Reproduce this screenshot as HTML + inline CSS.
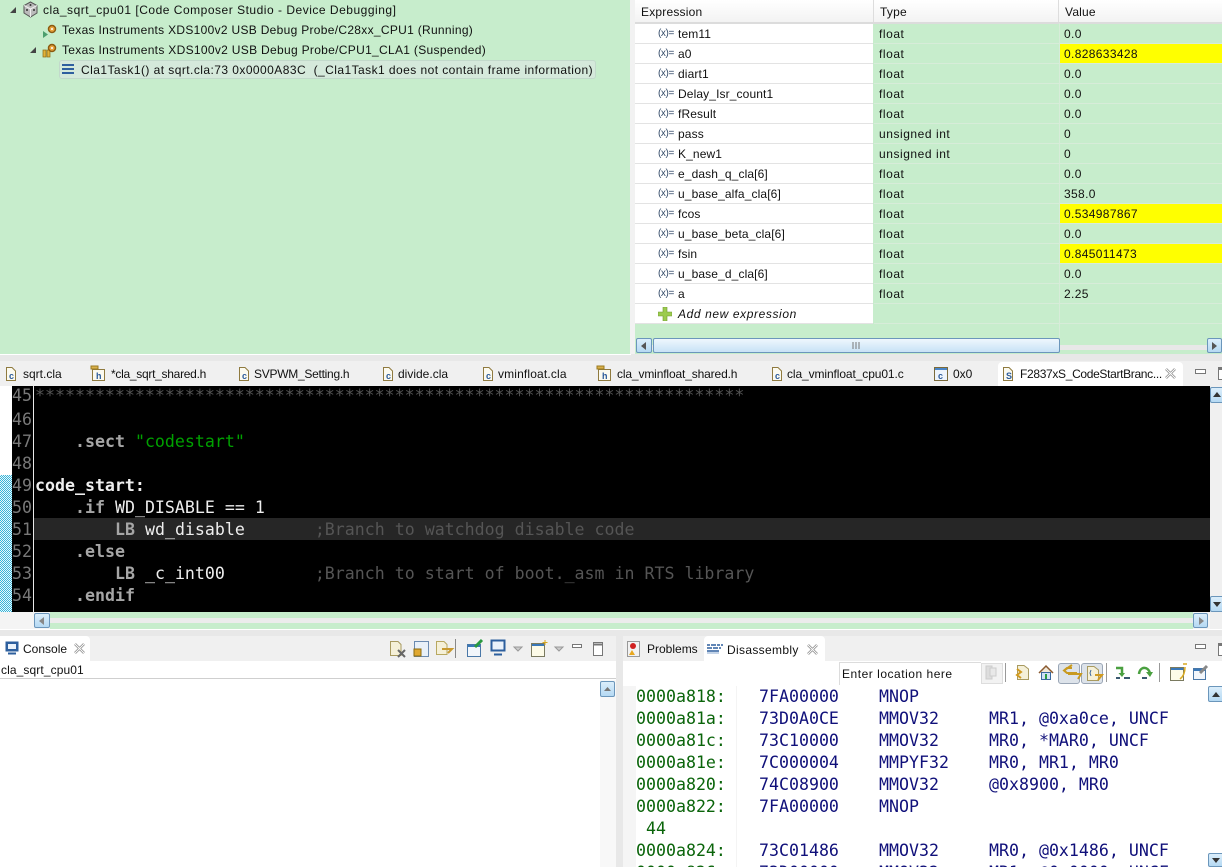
<!DOCTYPE html>
<html><head><meta charset="utf-8"><style>
html,body{margin:0;padding:0;width:1222px;height:867px;overflow:hidden;background:#e8e8e8}
body{position:relative;font:12px "Liberation Sans",sans-serif;color:#111}
div,span.a,svg{position:absolute}
.t{white-space:pre;line-height:16px;height:16px}
.m{font:16.6px "DejaVu Sans Mono",monospace;white-space:pre;line-height:22px;height:22px}
.ln{left:12px;width:20px;color:#787878;font:16.6px "DejaVu Sans Mono",monospace;line-height:22px;height:22px}
.c{color:#a6a6a6;font-weight:bold}.w{color:#eee}.k{color:#a6a6a6;font-weight:bold}.g{color:#00a000}.cm{color:#555}
.ad{color:#0a640a;left:636px}.hx,.op,.ar{color:#10107a}
.hx{left:759px}.op{left:879px}.ar{left:989px}
.sb{background:linear-gradient(#dbeefb,#b5d9f3);border:1px solid #6b96bb;border-radius:2px;box-sizing:border-box}
.h{left:635px;width:238px;height:19px;background:#fff;border-bottom:1px solid #e3e3e3}
.gl{left:874px;right:0;height:1px;background:#d7ecd9}
.x{font-size:10px;color:#334a68;left:658px;line-height:16px;letter-spacing:-.4px}
.n{left:678px;letter-spacing:.12px}.ty{left:879px;letter-spacing:.55px}.v{left:1064px;letter-spacing:.35px}
.y{left:1060px;width:162px;height:19px;background:#ff0}
</style></head><body>

<!-- top left -->
<div style="left:0;top:0;width:630px;height:354px;background:#c7edcc;border-right:1px solid #fff;border-bottom:1px solid #fff"></div>
<div style="left:630px;top:0;width:5px;height:354px;background:#f2f2f2"></div>

<svg style="left:9px;top:6px" width="8" height="8"><path d="M7 1V7H1Z" fill="#444"/></svg>
<svg style="left:22px;top:1px" width="17" height="17" viewBox="0 0 17 17"><path d="M8.500 1L15 4.500V12L8.500 16L2 12V4.500Z" fill="#bbb" stroke="#555"/><path d="M2 4.500L8.500 8L15 4.500M8.500 8V16" fill="none" stroke="#eee"/><circle cx="5" cy="9" r="1" fill="#333"/><circle cx="12" cy="9" r="1" fill="#333"/><circle cx="8.500" cy="4" r="1" fill="#333"/></svg>
<div class="t" style="left:43px;top:2px;letter-spacing:.51px">cla_sqrt_cpu01 [Code Composer Studio - Device Debugging]</div>

<svg style="left:42px;top:23px" width="16" height="16" viewBox="0 0 16 16"><path d="M1 8V15L6 11.500Z" fill="#4c9f6e"/><circle cx="10" cy="6" r="3.500" fill="#e8a33d" stroke="#8a5a10" stroke-width="1.500"/><circle cx="10" cy="6" r="1" fill="#fff"/></svg>
<div class="t" style="left:62px;top:22px;letter-spacing:.3px">Texas Instruments XDS100v2 USB Debug Probe/C28xx_CPU1 (Running)</div>

<svg style="left:29px;top:46px" width="8" height="8"><path d="M7 1V7H1Z" fill="#444"/></svg>
<svg style="left:41px;top:42px" width="17" height="16" viewBox="0 0 17 16"><rect x="2" y="8" width="3" height="7" fill="#e2b23a" stroke="#8a6a10" stroke-width=".7"/><rect x="6" y="8" width="3" height="7" fill="#e2b23a" stroke="#8a6a10" stroke-width=".7"/><circle cx="11" cy="6" r="3.500" fill="#e8a33d" stroke="#8a5a10" stroke-width="1.500"/><circle cx="11" cy="6" r="1" fill="#fff"/></svg>
<div class="t" style="left:62px;top:42px;letter-spacing:.31px">Texas Instruments XDS100v2 USB Debug Probe/CPU1_CLA1 (Suspended)</div>

<div style="left:59px;top:60px;width:537px;height:19px;background:#d5e9db;border:1px solid #c2d9cb;border-radius:3px;box-sizing:border-box"></div>
<svg style="left:62px;top:63px" width="13" height="13"><path d="M0 2H12M0 6H12M0 10H12" stroke="#2f5f9f" stroke-width="2"/></svg>
<div class="t" style="left:81px;top:62px;letter-spacing:.44px">Cla1Task1() at sqrt.cla:73 0x0000A83C  (_Cla1Task1 does not contain frame information)</div>

<!-- top right -->
<div style="left:635px;top:23px;width:587px;height:331px;background:#c7edcc"></div>
<div style="left:635px;top:0;width:587px;height:22px;background:linear-gradient(#fff,#f3f3f3);border-bottom:2px solid #dcdcdc"></div>
<div style="left:873px;top:0;width:1px;height:22px;background:#ddd"></div>
<div style="left:1058px;top:0;width:1px;height:22px;background:#ddd"></div>
<div class="t" style="left:641px;top:4px;letter-spacing:.2px">Expression</div>
<div class="t" style="left:880px;top:4px;letter-spacing:.2px">Type</div>
<div class="t" style="left:1065px;top:4px;letter-spacing:.2px">Value</div>
<div style="left:1059px;top:23px;width:1px;height:315px;background:#d7ecd9"></div>

<div class="h" style="top:24px"></div><div class="h" style="top:44px"></div><div class="h" style="top:64px"></div><div class="h" style="top:84px"></div><div class="h" style="top:104px"></div><div class="h" style="top:124px"></div><div class="h" style="top:144px"></div><div class="h" style="top:164px"></div><div class="h" style="top:184px"></div><div class="h" style="top:204px"></div><div class="h" style="top:224px"></div><div class="h" style="top:244px"></div><div class="h" style="top:264px"></div><div class="h" style="top:284px"></div><div class="h" style="top:304px"></div>
<div class="gl" style="top:43px"></div><div class="gl" style="top:63px"></div><div class="gl" style="top:83px"></div><div class="gl" style="top:103px"></div><div class="gl" style="top:123px"></div><div class="gl" style="top:143px"></div><div class="gl" style="top:163px"></div><div class="gl" style="top:183px"></div><div class="gl" style="top:203px"></div><div class="gl" style="top:223px"></div><div class="gl" style="top:243px"></div><div class="gl" style="top:263px"></div><div class="gl" style="top:283px"></div><div class="gl" style="top:303px"></div><div class="gl" style="top:323px"></div>
<div class="y" style="top:44px"></div><div class="y" style="top:204px"></div><div class="y" style="top:244px"></div>

<div class="t x" style="top:26px">(x)=</div><div class="t n" style="top:26px">tem11</div><div class="t ty" style="top:26px">float</div><div class="t v" style="top:26px">0.0</div>
<div class="t x" style="top:46px">(x)=</div><div class="t n" style="top:46px">a0</div><div class="t ty" style="top:46px">float</div><div class="t v" style="top:46px">0.828633428</div>
<div class="t x" style="top:66px">(x)=</div><div class="t n" style="top:66px">diart1</div><div class="t ty" style="top:66px">float</div><div class="t v" style="top:66px">0.0</div>
<div class="t x" style="top:86px">(x)=</div><div class="t n" style="top:86px">Delay_Isr_count1</div><div class="t ty" style="top:86px">float</div><div class="t v" style="top:86px">0.0</div>
<div class="t x" style="top:106px">(x)=</div><div class="t n" style="top:106px">fResult</div><div class="t ty" style="top:106px">float</div><div class="t v" style="top:106px">0.0</div>
<div class="t x" style="top:126px">(x)=</div><div class="t n" style="top:126px">pass</div><div class="t ty" style="top:126px">unsigned int</div><div class="t v" style="top:126px">0</div>
<div class="t x" style="top:146px">(x)=</div><div class="t n" style="top:146px">K_new1</div><div class="t ty" style="top:146px">unsigned int</div><div class="t v" style="top:146px">0</div>
<div class="t x" style="top:166px">(x)=</div><div class="t n" style="top:166px">e_dash_q_cla[6]</div><div class="t ty" style="top:166px">float</div><div class="t v" style="top:166px">0.0</div>
<div class="t x" style="top:186px">(x)=</div><div class="t n" style="top:186px">u_base_alfa_cla[6]</div><div class="t ty" style="top:186px">float</div><div class="t v" style="top:186px">358.0</div>
<div class="t x" style="top:206px">(x)=</div><div class="t n" style="top:206px">fcos</div><div class="t ty" style="top:206px">float</div><div class="t v" style="top:206px">0.534987867</div>
<div class="t x" style="top:226px">(x)=</div><div class="t n" style="top:226px">u_base_beta_cla[6]</div><div class="t ty" style="top:226px">float</div><div class="t v" style="top:226px">0.0</div>
<div class="t x" style="top:246px">(x)=</div><div class="t n" style="top:246px">fsin</div><div class="t ty" style="top:246px">float</div><div class="t v" style="top:246px">0.845011473</div>
<div class="t x" style="top:266px">(x)=</div><div class="t n" style="top:266px">u_base_d_cla[6]</div><div class="t ty" style="top:266px">float</div><div class="t v" style="top:266px">0.0</div>
<div class="t x" style="top:286px">(x)=</div><div class="t n" style="top:286px">a</div><div class="t ty" style="top:286px">float</div><div class="t v" style="top:286px">2.25</div>
<svg style="left:658px;top:307px" width="14" height="14"><path d="M5 0H9V5H14V9H9V14H5V9H0V5H5Z" fill="#9ccb4f" stroke="#6f9a30" stroke-width=".6"/></svg>
<div class="t n" style="top:306px;font-style:italic;letter-spacing:.6px">Add new expression</div>

<!-- top h-scroll -->
<div style="left:636px;top:345px;width:586px;height:5px;background:#e8e8e8"></div>
<div class="sb" style="left:636px;top:338px;width:16px;height:15px"></div>
<svg style="left:641px;top:342px" width="6" height="8"><path d="M5 0V8L0 4Z" fill="#555"/></svg>
<div class="sb" style="left:653px;top:338px;width:407px;height:15px;background:linear-gradient(#eef7fd,#c8e2f6)"></div>
<svg style="left:852px;top:342px" width="8" height="7"><path d="M1 0V7M4 0V7M7 0V7" stroke="#777"/></svg>
<div class="sb" style="left:1207px;top:338px;width:15px;height:15px"></div>
<svg style="left:1212px;top:342px" width="6" height="8"><path d="M0 0V8L5 4Z" fill="#555"/></svg>

<!-- editor tabs -->
<div style="left:0;top:361px;width:1222px;height:25px;background:#f0f0f0"></div>
<div style="left:998px;top:362px;width:185px;height:24px;background:#fff;border-radius:4px 4px 0 0"></div>
<svg style="left:0;top:0" width="1222" height="390" fill="none">
<g stroke="#8f7a3f" fill="#fbfaf0"><path d="M6.500 367.500H12L15.500 371V380.500H6.500Z"/><path d="M239.500 367.500H245L248.500 371V380.500H239.500Z"/><path d="M383.500 367.500H389L392.500 371V380.500H383.500Z"/><path d="M483.500 367.500H489L492.500 371V380.500H483.500Z"/><path d="M772.500 367.500H778L781.500 371V380.500H772.500Z"/><path d="M1003.500 367.500H1009L1012.500 371V380.500H1003.500Z"/><path d="M92.500 369.500H104.500V380.500H92.500Z"/><path d="M598.500 369.500H610.500V380.500H598.500Z"/></g>
<path d="M91 366H98V369H91ZM597 366H604V369H597Z" fill="#d9b04a" stroke="#9a7a20"/>
<rect x="934.500" y="367.500" width="13" height="13" fill="#eef4fb" stroke="#7a6a3a"/><path d="M935 369H947" stroke="#4a86c8" stroke-width="2"/>
</svg>
<div class="t" style="left:9px;top:370px;font-size:9px;font-weight:bold;color:#2a5a9a;line-height:12px;height:12px">c</div>
<div class="t" style="left:242px;top:370px;font-size:9px;font-weight:bold;color:#2a5a9a;line-height:12px;height:12px">c</div>
<div class="t" style="left:386px;top:370px;font-size:9px;font-weight:bold;color:#2a5a9a;line-height:12px;height:12px">c</div>
<div class="t" style="left:486px;top:370px;font-size:9px;font-weight:bold;color:#2a5a9a;line-height:12px;height:12px">c</div>
<div class="t" style="left:775px;top:370px;font-size:9px;font-weight:bold;color:#2a5a9a;line-height:12px;height:12px">c</div>
<div class="t" style="left:1006px;top:370px;font-size:9px;font-weight:bold;color:#2a5a9a;line-height:12px;height:12px">S</div>
<div class="t" style="left:96px;top:371px;font-size:9px;font-weight:bold;color:#2a5a9a;line-height:10px;height:10px">h</div>
<div class="t" style="left:602px;top:371px;font-size:9px;font-weight:bold;color:#2a5a9a;line-height:10px;height:10px">h</div>
<div class="t" style="left:938px;top:370px;font-size:9px;font-weight:bold;color:#2a5a9a;line-height:12px;height:12px">c</div>
<div class="t" style="left:23px;top:366px">sqrt.cla</div>
<div class="t" style="left:111px;top:366px;letter-spacing:-.28px">*cla_sqrt_shared.h</div>
<div class="t" style="left:254px;top:366px;letter-spacing:-.27px">SVPWM_Setting.h</div>
<div class="t" style="left:398px;top:366px">divide.cla</div>
<div class="t" style="left:498px;top:366px;letter-spacing:.15px">vminfloat.cla</div>
<div class="t" style="left:617px;top:366px;letter-spacing:-.14px">cla_vminfloat_shared.h</div>
<div class="t" style="left:787px;top:366px;letter-spacing:-.1px">cla_vminfloat_cpu01.c</div>
<div class="t" style="left:953px;top:366px">0x0</div>
<div class="t" style="left:1020px;top:366px;letter-spacing:-.33px">F2837xS_CodeStartBranc...</div>
<svg style="left:1165px;top:368px" width="11" height="11"><path d="M1 1L10 10M10 1L1 10" stroke="#888" stroke-width="2.500"/><path d="M1 1L10 10M10 1L1 10" stroke="#fff"/></svg>
<div style="left:1195px;top:369px;width:9px;height:3px;border:1px solid #777;background:#fff"></div>
<div style="left:1218px;top:367px;width:9px;height:9px;border:1px solid #777;border-top-width:3px;background:#fff"></div>

<!-- editor -->
<div style="left:0;top:386px;width:1210px;height:226px;background:#000"></div>
<div style="left:0;top:386px;width:12px;height:226px;background:#fff"></div>
<div style="left:0;top:475px;width:12px;height:137px;background:repeating-conic-gradient(#38b4d8 0 25%,#eaf8fc 0 50%) 0 0/2px 2px"></div>
<div style="left:33px;top:386px;width:1px;height:226px;background:#e8e8e8"></div>
<div style="left:34px;top:518px;width:1176px;height:22px;background:#262626"></div>
<div class="ln" style="top:385px">45</div><div class="ln" style="top:409px">46</div><div class="ln" style="top:431px">47</div><div class="ln" style="top:453px">48</div><div class="ln" style="top:475px">49</div><div class="ln" style="top:497px">50</div><div class="ln" style="top:519px">51</div><div class="ln" style="top:541px">52</div><div class="ln" style="top:563px">53</div><div class="ln" style="top:585px">54</div>
<div class="m cm" style="left:35px;top:385px">***********************************************************************</div>
<div class="m" style="left:75px;top:431px"><span class="k">.sect</span> <span class="g">"codestart"</span></div>
<div class="m w" style="left:35px;top:475px;font-weight:bold">code_start:</div>
<div class="m w" style="left:75px;top:497px"><span class="c">.if</span> WD_DISABLE == 1</div>
<div class="m w" style="left:115px;top:519px"><span class="c">LB</span> wd_disable       <span class="cm">;Branch to watchdog disable code</span></div>
<div class="m c" style="left:75px;top:541px">.else</div>
<div class="m w" style="left:115px;top:563px"><span class="c">LB</span> _c_int00         <span class="cm">;Branch to start of boot._asm in RTS library</span></div>
<div class="m c" style="left:75px;top:585px">.endif</div>

<!-- editor scrollbars -->
<div style="left:1210px;top:386px;width:12px;height:243px;background:#f0f0f0"></div>
<div class="sb" style="left:1210px;top:387px;width:14px;height:16px"></div>
<svg style="left:1213px;top:392px" width="8" height="5"><path d="M0 5H8L4 0Z" fill="#333"/></svg>
<div class="sb" style="left:1210px;top:596px;width:14px;height:16px"></div>
<svg style="left:1213px;top:602px" width="8" height="5"><path d="M0 0H8L4 5Z" fill="#333"/></svg>
<div style="left:0;top:612px;width:1210px;height:17px;background:#f4f4f4"></div>
<div style="left:50px;top:612px;width:1143px;height:6px;background:#c7edcc"></div>
<div style="left:50px;top:618px;width:1143px;height:5px;background:#ececec"></div>
<div style="left:50px;top:623px;width:1143px;height:6px;background:#c7edcc"></div>
<div class="sb" style="left:34px;top:613px;width:16px;height:15px"></div>
<svg style="left:39px;top:617px" width="5" height="8"><path d="M5 0V8L0 4Z" fill="#888"/></svg>
<div class="sb" style="left:1193px;top:613px;width:15px;height:15px"></div>
<svg style="left:1199px;top:617px" width="5" height="8"><path d="M0 0V8L5 4Z" fill="#888"/></svg>
<div style="left:0;top:629px;width:1222px;height:1px;background:#fff"></div>

<!-- console -->
<div style="left:0;top:636px;width:616px;height:231px;background:#fff"></div>
<div style="left:0;top:636px;width:616px;height:25px;background:#f0f0f0"></div>
<div style="left:0;top:636px;width:90px;height:25px;background:#fff;border-radius:0 4px 0 0"></div>
<svg style="left:5px;top:641px" width="14" height="14"><rect x=".5" y=".5" width="13" height="10" fill="#2d5f9e"/><rect x="3" y="3" width="8" height="5" fill="#eaf2fb"/><path d="M3 12.500H11" stroke="#2d5f9e" stroke-width="2"/></svg>
<div class="t" style="left:23px;top:641px">Console</div>
<svg style="left:74px;top:643px" width="11" height="11"><path d="M1 1L10 10M10 1L1 10" stroke="#888" stroke-width="2.500"/><path d="M1 1L10 10M10 1L1 10" stroke="#fff"/></svg>
<svg style="left:385px;top:638px" width="225" height="22" viewBox="0 0 225 22" fill="none">
<path d="M5.500 3.500H13L16 6.500V17.500H5.500Z" fill="#f5f0d8" stroke="#a89a60"/><path d="M13 12L20 19M20 12L13 19" stroke="#666" stroke-width="2"/>
<rect x="29.500" y="3.500" width="14" height="15" fill="#e8f0f8" stroke="#6a8ab0"/><rect x="29" y="11" width="7" height="7" fill="#e0a830" stroke="#8a6a10"/>
<path d="M51.500 3.500H59L62 6.500V16.500H51.500Z" fill="#f5f0d8" stroke="#b8a860"/><path d="M57 11H67L63 15" stroke="#c89a30" stroke-width="2"/>
<path d="M70.500 1V20" stroke="#888"/>
<rect x="82.500" y="6.500" width="13" height="12" fill="#f2f6fb" stroke="#4a78a8"/><path d="M83 8H95" stroke="#3a78b8" stroke-width="2"/><path d="M90 9L97 2" stroke="#2a9a40" stroke-width="3"/>
<rect x="106.500" y="2.500" width="13" height="10" fill="#eaf2fb" stroke="#2d5f9e" stroke-width="2"/><path d="M109 16.500H117" stroke="#2d5f9e" stroke-width="2"/>
<path d="M129 9L133 13L137 9Z" fill="#ccc" stroke="#999"/>
<rect x="146.500" y="5.500" width="13" height="13" fill="#fdfbe8" stroke="#7a7a60"/><path d="M147 7H159" stroke="#3a78b8" stroke-width="2"/><path d="M160 2V7M157.500 4.500H162.500" stroke="#d8a820"/>
<path d="M170 9L174 13L178 9Z" fill="#ccc" stroke="#999"/>
<rect x="187.500" y="6.500" width="9" height="3" fill="#fff" stroke="#777"/>
<rect x="208.500" y="4.500" width="9" height="13" fill="#fff" stroke="#777"/><path d="M209 6.500H217" stroke="#777" stroke-width="2"/>
</svg>
<div class="t" style="left:1px;top:662px;letter-spacing:.1px">cla_sqrt_cpu01</div>
<div style="left:0;top:678px;width:616px;height:1px;background:#cfcfcf"></div>
<div style="left:600px;top:680px;width:16px;height:187px;background:#f8f8f8"></div>
<div class="sb" style="left:600px;top:681px;width:15px;height:16px"></div>
<svg style="left:604px;top:687px" width="7" height="4"><path d="M0 4H7L3.500 0Z" fill="#777"/></svg>

<!-- disassembly -->
<div style="left:623px;top:636px;width:599px;height:231px;background:#fff"></div>
<div style="left:623px;top:636px;width:599px;height:25px;background:#f0f0f0"></div>
<div style="left:704px;top:636px;width:121px;height:25px;background:#fff;border-radius:4px 4px 0 0"></div>
<div style="left:623px;top:686px;width:13px;height:181px;background:#f5f5f5"></div>
<div style="left:736px;top:686px;width:1px;height:181px;background:#f4f4f4"></div>
<svg style="left:627px;top:641px" width="14" height="16"><rect x=".5" y=".5" width="12" height="15" fill="#f2f2f2" stroke="#999"/><circle cx="6" cy="5" r="3" fill="#d02020"/><path d="M2 14L5 9L8 14Z" fill="#e8a820"/></svg>
<div class="t" style="left:647px;top:641px">Problems</div>
<svg style="left:707px;top:644px" width="16" height="10"><path d="M0 1H3M4 1H9M10 1H13M14 1H16M0 4H5M6 4H11M12 4H14M0 7H12" stroke="#2d5f9e" stroke-width="1.500"/><path d="M0 9H12" stroke="#88a8d0"/></svg>
<div class="t" style="left:727px;top:642px;letter-spacing:.33px">Disassembly</div>
<svg style="left:807px;top:644px" width="11" height="11"><path d="M1 1L10 10M10 1L1 10" stroke="#888" stroke-width="2.500"/><path d="M1 1L10 10M10 1L1 10" stroke="#fff"/></svg>
<div style="left:1195px;top:644px;width:9px;height:3px;border:1px solid #777;background:#fff"></div>
<div style="left:1218px;top:643px;width:9px;height:9px;border:1px solid #777;border-top-width:3px;background:#fff"></div>

<div style="left:839px;top:662px;width:142px;height:23px;background:#fff;border:1px solid #dcdcdc;border-width:1px 0 0 1px;box-sizing:border-box"></div>
<div class="t" style="left:842px;top:666px;letter-spacing:.52px">Enter location here</div>
<div style="left:981px;top:663px;width:22px;height:21px;background:#f2f2f2;border:1px solid #ddd;box-sizing:border-box"></div>
<div style="left:1058px;top:663px;width:22px;height:21px;background:#dde3ea;border:1px solid #9aa6b6;border-radius:3px;box-sizing:border-box"></div>
<div style="left:1081px;top:663px;width:22px;height:21px;background:#dde3ea;border:1px solid #9aa6b6;border-radius:3px;box-sizing:border-box"></div>
<svg style="left:980px;top:660px" width="242" height="26" viewBox="0 0 242 26" fill="none">
<path d="M6 6H12V19H6Z" fill="#ddd" stroke="#ccc"/><path d="M10 8H16V16H10Z" fill="#e8e8e8" stroke="#ccc"/>
<path d="M25.500 3V22" stroke="#999"/>
<path d="M37.500 5.500H44L48.500 9V19.500H37.500Z" fill="#f5f0d8" stroke="#a89a60"/><path d="M37 9L41 12L37 15L41 18" stroke="#d09a20" stroke-width="2"/>
<path d="M59 13L66 6L73 13" fill="#f0e8d8" stroke="#8a5a30" stroke-width="1.500"/><rect x="61.500" y="12.500" width="9" height="7" fill="#cfe0f4" stroke="#3a68a0"/><rect x="65" y="14" width="2" height="5" fill="#2a9a40"/>
<path d="M92 8H87L84 10.500L87 13H97M92 5L84 10.500M88 14H101L98 19" stroke="#c89a20" stroke-width="2"/>
<path d="M107.500 6.500H114L118.500 10V20.500H107.500Z" fill="#f5f0d8" stroke="#a89a60"/><path d="M111 10L110 13L111 16" stroke="#3a68a0"/><path d="M115 15H122L118 20" stroke="#d09a20" stroke-width="2"/>
<path d="M126.500 3V22" stroke="#999"/>
<path d="M136 8H142V14" stroke="#4aa040" stroke-width="2.500"/><path d="M138.500 13H145L142 17Z" fill="#4aa040"/><path d="M136 18H140M144 18H150" stroke="#3a5a70" stroke-width="2"/>
<path d="M159 14C160 6 168 6 170 13" stroke="#4aa040" stroke-width="2.500"/><path d="M166 12H173L170 17Z" fill="#4aa040"/><path d="M162 18H167" stroke="#3a5a70" stroke-width="2"/>
<path d="M179.500 3V22" stroke="#999"/>
<rect x="190.500" y="7.500" width="13" height="13" fill="#fdfbe8" stroke="#7a7a60"/><path d="M191 9H203" stroke="#3a78b8" stroke-width="2"/><path d="M200 19C204 16 205 12 205 7M203 4H207" stroke="#d8a820" stroke-width="1.500"/>
<rect x="213.500" y="8.500" width="12" height="11" fill="#f2f6fb" stroke="#4a78a8"/><path d="M214 10H225" stroke="#3a78b8" stroke-width="2"/><path d="M220 13L227 6" stroke="#888" stroke-width="3"/>
</svg>

<div class="m ad" style="top:686px">0000a818:</div><div class="m hx" style="top:686px">7FA00000</div><div class="m op" style="top:686px">MNOP</div>
<div class="m ad" style="top:708px">0000a81a:</div><div class="m hx" style="top:708px">73D0A0CE</div><div class="m op" style="top:708px">MMOV32</div><div class="m ar" style="top:708px">MR1, @0xa0ce, UNCF</div>
<div class="m ad" style="top:730px">0000a81c:</div><div class="m hx" style="top:730px">73C10000</div><div class="m op" style="top:730px">MMOV32</div><div class="m ar" style="top:730px">MR0, *MAR0, UNCF</div>
<div class="m ad" style="top:752px">0000a81e:</div><div class="m hx" style="top:752px">7C000004</div><div class="m op" style="top:752px">MMPYF32</div><div class="m ar" style="top:752px">MR0, MR1, MR0</div>
<div class="m ad" style="top:774px">0000a820:</div><div class="m hx" style="top:774px">74C08900</div><div class="m op" style="top:774px">MMOV32</div><div class="m ar" style="top:774px">@0x8900, MR0</div>
<div class="m ad" style="top:796px">0000a822:</div><div class="m hx" style="top:796px">7FA00000</div><div class="m op" style="top:796px">MNOP</div>
<div class="m ad" style="top:818px;left:646px">44</div>
<div class="m ad" style="top:840px">0000a824:</div><div class="m hx" style="top:840px">73C01486</div><div class="m op" style="top:840px">MMOV32</div><div class="m ar" style="top:840px">MR0, @0x1486, UNCF</div>
<div class="m ad" style="top:862px">0000a826:</div><div class="m hx" style="top:862px">73D00000</div><div class="m op" style="top:862px">MMOV32</div><div class="m ar" style="top:862px">MR1, @0x0000, UNCF</div>

<div class="sb" style="left:1208px;top:686px;width:16px;height:16px"></div>
<svg style="left:1212px;top:692px" width="8" height="5"><path d="M0 5H8L4 0Z" fill="#333"/></svg>
<div class="sb" style="left:1208px;top:853px;width:16px;height:14px"></div>
<svg style="left:1212px;top:858px" width="8" height="5"><path d="M0 0H8L4 5Z" fill="#333"/></svg>
</body></html>
